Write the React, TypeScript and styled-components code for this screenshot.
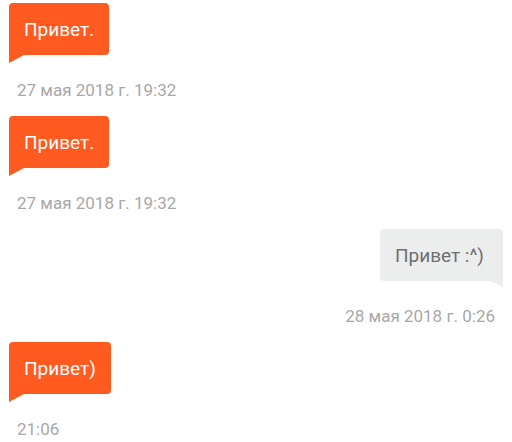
import React from "react";
import styled, { createGlobalStyle } from "styled-components";

const GlobalStyle = createGlobalStyle`
  body {
    margin: 0;
    background: #ffffff;
    font-family: Roboto, "Noto Sans", sans-serif;
  }
`;

const Feed = styled.div`
  display: flex;
  flex-direction: column;
  padding: 3px 9px 0;
`;

const Message = styled.div<{ $mine?: boolean }>`
  display: flex;
  flex-direction: column;
  align-items: ${p => (p.$mine ? "flex-end" : "flex-start")};
  height: 113px;
`;

const Bubble = styled.div<{ $mine?: boolean }>`
  position: relative;
  box-sizing: border-box;
  height: 52px;
  display: flex;
  align-items: center;
  padding: ${p => (p.$mine ? "0 19px 0 15px" : "0 15px")};
  font-size: 19px;
  color: ${p => (p.$mine ? "#6f6f6f" : "#ffffff")};
  background: ${p => (p.$mine ? "#eceeee" : "#ff5a1f")};
  border-radius: ${p => (p.$mine ? "4px 4px 0 4px" : "4px 4px 4px 0")};

  &::after {
    content: "";
    position: absolute;
    top: 100%;
    ${p => (p.$mine ? "right: 0;" : "left: 0;")}
    border-bottom: ${p => (p.$mine ? "6px" : "8px")} solid transparent;
    ${p =>
      p.$mine
        ? "border-right: 13px solid #eceeee;"
        : "border-left: 15px solid #ff5a1f;"}
  }
`;

const Time = styled.div`
  margin: 25px 8px 0;
  font-size: 17px;
  line-height: 20px;
  color: #a8a8a8;
`;

const messages = [
  { text: "Привет.", time: "27 мая 2018 г. 19:32" },
  { text: "Привет.", time: "27 мая 2018 г. 19:32" },
  { text: "Привет :^)", time: "28 мая 2018 г. 0:26", mine: true },
  { text: "Привет)", time: "21:06" },
];

const App = () => (
  <>
    <GlobalStyle />
    <Feed>
      {messages.map((m, i) => (
        <Message key={i} $mine={m.mine}>
          <Bubble $mine={m.mine}>{m.text}</Bubble>
          <Time>{m.time}</Time>
        </Message>
      ))}
    </Feed>
  </>
);

export default App;
